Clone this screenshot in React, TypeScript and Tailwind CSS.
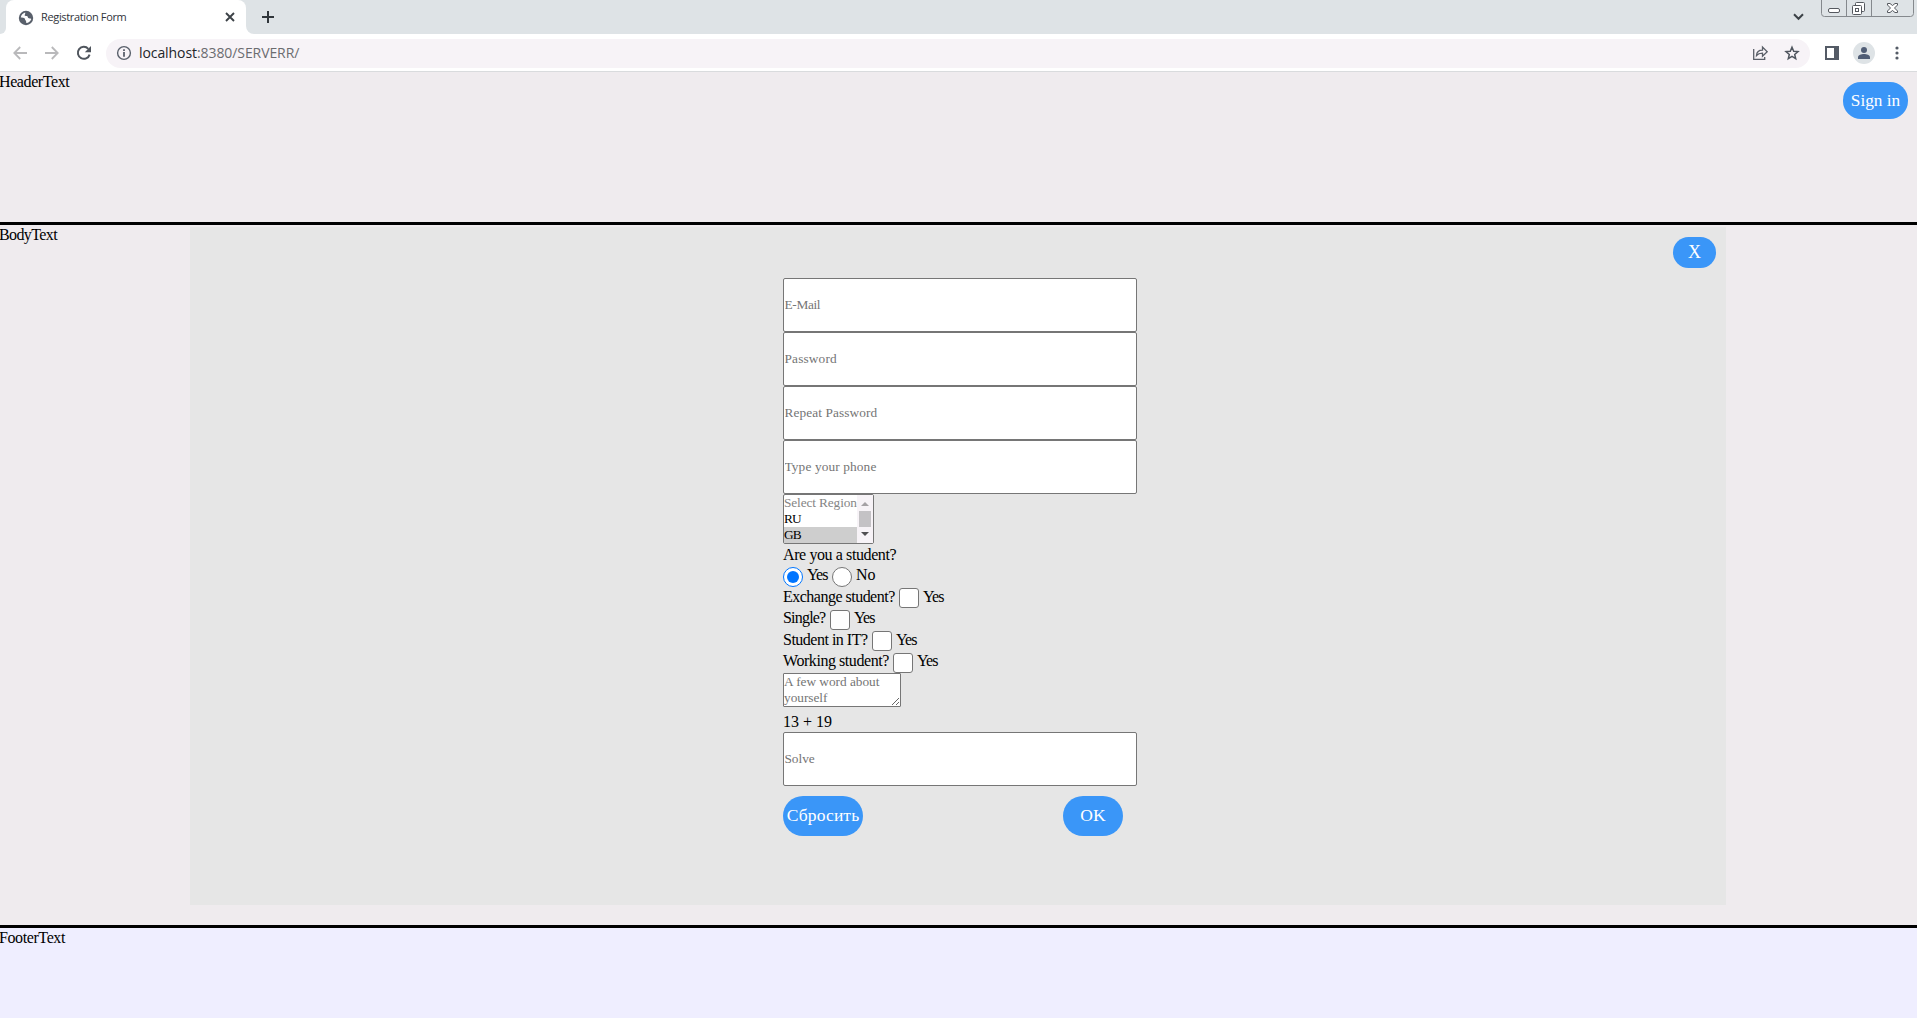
import React from "react";

const SERIF = "font-['Liberation_Serif',serif]";
const UI = "font-['Open_Sans','Noto_Sans',sans-serif]";

function TabStrip() {
  return (
    <div className="flex h-[34px] bg-[#dee3e6]">
      <div className="flex w-[6px] bg-white">
        <div className="h-[34px] w-[6px] rounded-br-[6px] bg-[#dee3e6]" />
      </div>
      <div className="flex w-[240px] items-center rounded-t-[8px] bg-white pl-[12px]">
        <svg className="mt-px h-[16px] w-[16px] shrink-0" viewBox="0 0 16 16">
          <circle cx="8" cy="8" r="7.2" fill="#59606b" />
          <path
            d="M7.2 2.6C5 3.2 3 5 2.8 7.6c1.400.2 3.300.2 3.900.9.600.7.100 1.900 1.300 2.300l.3 2.300c2.300-.1 4.400-1.600 5-4-.9-.9-2.200-.3-3-1-.7-.7-.2-1.600-1.300-2-.9-.3-1.700.2-2.300-.5-.5-.7.900-1.300.500-3z"
            fill="#fff"
          />
        </svg>
        <span className="ml-[7px] h-[18px] w-[184px] whitespace-nowrap text-[11px] leading-[18px] tracking-[-0.35px] text-[#30343a]">
          Registration Form
        </span>
        <svg className="h-[10px] w-[10px]" viewBox="0 0 10 10">
          <path d="M1 1l8 8M9 1l-8 8" stroke="#3c4247" strokeWidth="1.9" />
        </svg>
      </div>
      <div className="w-[8px] bg-white">
        <div className="h-[34px] w-[8px] rounded-bl-[8px] bg-[#dee3e6]" />
      </div>
      <svg className="ml-[7px] mt-[10px] h-[14px] w-[14px]" viewBox="0 0 14 14">
        <path d="M7 1v12M1 7h12" stroke="#30363b" strokeWidth="2" />
      </svg>
      <svg className="ml-auto mt-[13px] h-[8px] w-[11px]" viewBox="0 0 11 8">
        <path d="M1 1.300l4.500 4.500L10 1.300" stroke="#3c4247" strokeWidth="2" fill="none" />
      </svg>
      <WindowButtons />
    </div>
  );
}

function WindowButtons() {
  return (
    <svg className="ml-[17px] mr-[3px] h-[18px] w-[93px]" viewBox="0 0 93 18" fill="none">
      <path d="M.5 0v13.500q0 3 3 3h86q3 0 3-3V0M25.500 0v16M50.500 0v16" stroke="#85898d" />
      <rect x="7.500" y="8.500" width="11" height="4" rx="1.500" fill="#fff" stroke="#55595f" />
      <rect x="34.500" y="2.500" width="9" height="9" rx="1" fill="#fff" stroke="#55595f" />
      <rect x="31.500" y="5.500" width="9" height="9" rx="1" fill="#fff" stroke="#55595f" />
      <rect x="34.500" y="8.500" width="3" height="3" stroke="#55595f" />
      <path
        d="M66.500 3.500h2.500l2.500 2 2.500-2h2.500v1.500L73.500 8l3 3v1.500H74l-2.500-2-2.500 2h-2.500V11l3-3-3-3z"
        fill="#fff"
        stroke="#55595f"
      />
    </svg>
  );
}

function Toolbar() {
  return (
    <div className="flex h-[38px] items-center border-b border-[#d9dbdd] bg-white pt-px">
      <svg className="ml-[13px] h-[14px] w-[14px]" viewBox="0 0 14 14" fill="none" stroke="#b9b9bb" strokeWidth="1.800">
        <path d="M14 7H1.500M7.200 1L1.300 7l5.900 6" />
      </svg>
      <svg className="ml-[18px] h-[14px] w-[14px]" viewBox="0 0 14 14" fill="none" stroke="#b9b9bb" strokeWidth="1.800">
        <path d="M0 7h12.500M6.800 1l5.900 6-5.900 6" />
      </svg>
      <svg className="ml-[17px] h-[16px] w-[16px]" viewBox="0 0 16 16">
        <path d="M13.600 9.600A6 6 0 1 1 12.300 3.800" stroke="#4f555d" strokeWidth="2" fill="none" />
        <path d="M15 1v6.200H8.800z" fill="#4f555d" />
      </svg>
      <div className="ml-[14px] flex h-[29px] w-[1704px] items-center rounded-full bg-[#f7f3f7]">
        <svg className="ml-[10px] h-[16px] w-[16px]" viewBox="0 0 16 16" fill="none" stroke="#59606b">
          <circle cx="8" cy="8" r="6.400" strokeWidth="1.400" />
          <path d="M8 7v4.700M8 4.300v1.700" strokeWidth="1.800" />
        </svg>
        <span className="ml-[7px] h-[20px] whitespace-nowrap text-[14px] leading-[20px] tracking-[-0.080px] text-[#222529]">
          localhost<span className="text-[#6b6c70]">:8380/SERVERR/</span>
        </span>
        <svg className="ml-auto h-[16px] w-[17px]" viewBox="0 0 17 16" fill="none" stroke="#5a5f68" strokeWidth="1.300">
          <path d="M1.700 4v10.300h11V12M4.500 10.500c.2-3.300 2-5.300 6-5.300V2l4.700 4.700-4.700 4.500V8.200c-2.800 0-4.600.6-6 2.300z" />
        </svg>
        <svg className="ml-[15px] mr-[10px] h-[16px] w-[16px]" viewBox="0 0 16 16" fill="none" stroke="#50565f" strokeWidth="1.500">
          <path d="M8 2.200l1.700 4 4.300.4-3.300 2.800 1 4.200L8 11.400l-3.700 2.200 1-4.200L2 6.600l4.300-.4z" />
        </svg>
      </div>
      <svg className="ml-[15px] h-[14px] w-[14px]" viewBox="0 0 14 14">
        <path d="M1 1h12v12H1z" fill="#fff" stroke="#545b66" strokeWidth="2" />
        <path d="M9 0h5v14H9z" fill="#545b66" />
      </svg>
      <svg className="ml-[14px] h-[22px] w-[22px]" viewBox="0 0 22 22">
        <circle cx="11" cy="11" r="11" fill="#dee3e6" />
        <circle cx="11" cy="8" r="3" fill="#515e76" />
        <path d="M5 17v-1.600c0-2.200 3.400-3.300 6-3.300s6 1.100 6 3.300V17z" fill="#515e76" />
      </svg>
      <svg className="ml-[20px] h-[14px] w-[4px]" viewBox="0 0 4 14" fill="#545b66">
        <circle cx="2" cy="2" r="1.600" />
        <circle cx="2" cy="7" r="1.600" />
        <circle cx="2" cy="12" r="1.600" />
      </svg>
    </div>
  );
}

function Field({ placeholder, type = "text", className }: { placeholder: string; type?: string; className: string }) {
  return (
    <input
      type={type}
      placeholder={placeholder}
      className={`block h-[54px] w-[354px] rounded-[2px] border border-[#767676] bg-white pl-[0.500px] pr-px text-[13.330px] placeholder:text-[#757575] ${className}`}
    />
  );
}

function Check({
  label,
  className,
  labelClass,
  boxClass,
}: {
  label: string;
  className: string;
  labelClass: string;
  boxClass: string;
}) {
  return (
    <label className={`flex items-start leading-[18px] ${className}`}>
      <span className={`whitespace-nowrap ${labelClass}`}>{label}</span>
      <input
        type="checkbox"
        className={`mr-[4px] h-[20px] w-[20px] appearance-none rounded-[3px] border border-[#767676] bg-white ${boxClass}`}
      />
      <span className="tracking-[-0.900px]">Yes</span>
    </label>
  );
}

function RegionSelect() {
  return (
    <div className="flex h-[50px] w-[91px] rounded-[2px] border border-[#767676] bg-white text-[13.330px] leading-[16px]">
      <div className="w-[73px] whitespace-nowrap">
        <div className="h-[16px] tracking-[-0.120px] text-[#858585]">Select Region</div>
        <div className="h-[16px] tracking-[-0.900px]">RU</div>
        <div className="h-[16px] bg-[#cecece] tracking-[-0.900px]">GB</div>
      </div>
      <div className="flex w-[16px] flex-col items-center bg-[#f7f3f7]">
        <svg className="h-[16px] w-[8px]" viewBox="0 0 8 16">
          <path d="M0 11l4-4 4 4z" fill="#a5a2a5" />
        </svg>
        <div className="h-[16px] w-[12px] bg-[#c4c2c5]" />
        <svg className="h-[16px] w-[8px]" viewBox="0 0 8 16">
          <path d="M0 5l4 4 4-4z" fill="#505052" />
        </svg>
      </div>
    </div>
  );
}

function RegistrationForm() {
  return (
    <form className="flex w-[354px] flex-col" onSubmit={(e) => e.preventDefault()}>
      <Field placeholder="E-Mail" className="tracking-[-0.350px]" />
      <Field placeholder="Password" type="password" className="tracking-[0.150px]" />
      <Field placeholder="Repeat Password" type="password" className="tracking-[0.090px]" />
      <Field placeholder="Type your phone" className="tracking-[0.120px]" />
      <RegionSelect />
      <div className="mt-[2px] h-[18px] whitespace-nowrap leading-[18px] tracking-[-0.400px]">Are you a student?</div>
      <div className="mt-[2px] flex h-[22px] items-start leading-[18px]">
        <span className="mt-px flex h-[20px] w-[20px] items-center justify-center rounded-full border border-[#0075ff] bg-white">
          <span className="h-[12px] w-[12px] rounded-full bg-[#0075ff]" />
        </span>
        <span className="ml-[4px] w-[25px] tracking-[-0.900px]">Yes</span>
        <span className="mt-px h-[20px] w-[20px] rounded-full border border-[#767676] bg-white" />
        <span className="ml-[4px]">No</span>
      </div>
      <Check
        label="Exchange student?"
        className="h-[21px]"
        labelClass="w-[116px] tracking-[-0.510px]"
        boxClass="mt-0"
      />
      <Check label="Single?" className="h-[22px]" labelClass="w-[47px] tracking-[-0.800px]" boxClass="mt-px" />
      <Check label="Student in IT?" className="h-[21px]" labelClass="w-[89px] tracking-[-0.500px]" boxClass="mt-0" />
      <Check
        label="Working student?"
        className="h-[21px]"
        labelClass="w-[110px] tracking-[-0.440px]"
        boxClass="mt-px"
      />
      <textarea
        placeholder="A few word about yourself"
        className="block h-[34px] w-[118px] resize overflow-hidden rounded-[1px] border border-[#767676] bg-white text-[13.330px] leading-[16px] tracking-[-0.030px] placeholder:text-[#757575]"
      />
      <div className="mt-[6px] h-[19px] leading-[18px]">13 + 19</div>
      <Field placeholder="Solve" className="tracking-[-0.050px]" />
      <div className="mt-[10px] flex">
        <button className="h-[40px] w-[80px] whitespace-nowrap rounded-[20px] bg-[#3a96f8] pb-[2px] text-[17.500px] tracking-[0.130px] text-white">
          Сбросить
        </button>
        <button className="ml-[200px] h-[40px] w-[60px] rounded-[20px] bg-[#3a96f8] pb-[2px] text-[17.500px] text-white">
          OK
        </button>
      </div>
    </form>
  );
}

export default function App() {
  return (
    <div className="flex h-[1033px] w-[1917px] flex-col overflow-hidden bg-white">
      <div className={UI}>
        <TabStrip />
        <Toolbar />
      </div>
      <div className={`${SERIF} text-[16px] text-black`}>
        <header className="flex h-[153px] items-start justify-between border-b-[3px] border-black bg-[#efebee]">
          <span className="-ml-px mt-px leading-[18px] tracking-[-0.400px]">HeaderText</span>
          <button className="mr-[9px] mt-[10px] h-[37px] w-[65px] rounded-[18px] bg-[#3a96f8] text-[17.300px] text-white">
            Sign in
          </button>
        </header>
        <main className="flex h-[703px] items-start border-b-[3px] border-black bg-[#efebee]">
          <span className="-ml-px mt-px w-[191px] leading-[18px] tracking-[-0.600px]">BodyText</span>
          <section className="mt-[2px] flex h-[678px] w-[1536px] items-start bg-[#e6e6e6] pl-[593px] pt-[51px]">
            <RegistrationForm />
            <button className="-mt-[41px] ml-auto mr-[10px] h-[31px] w-[43px] rounded-[16px] bg-[#3a96f8] text-[18px] text-white">
              X
            </button>
          </section>
        </main>
        <footer className="flex h-[90px] items-start bg-[#efeeff]">
          <span className="-ml-px mt-px leading-[18px] tracking-[-0.400px]">FooterText</span>
        </footer>
      </div>
    </div>
  );
}
